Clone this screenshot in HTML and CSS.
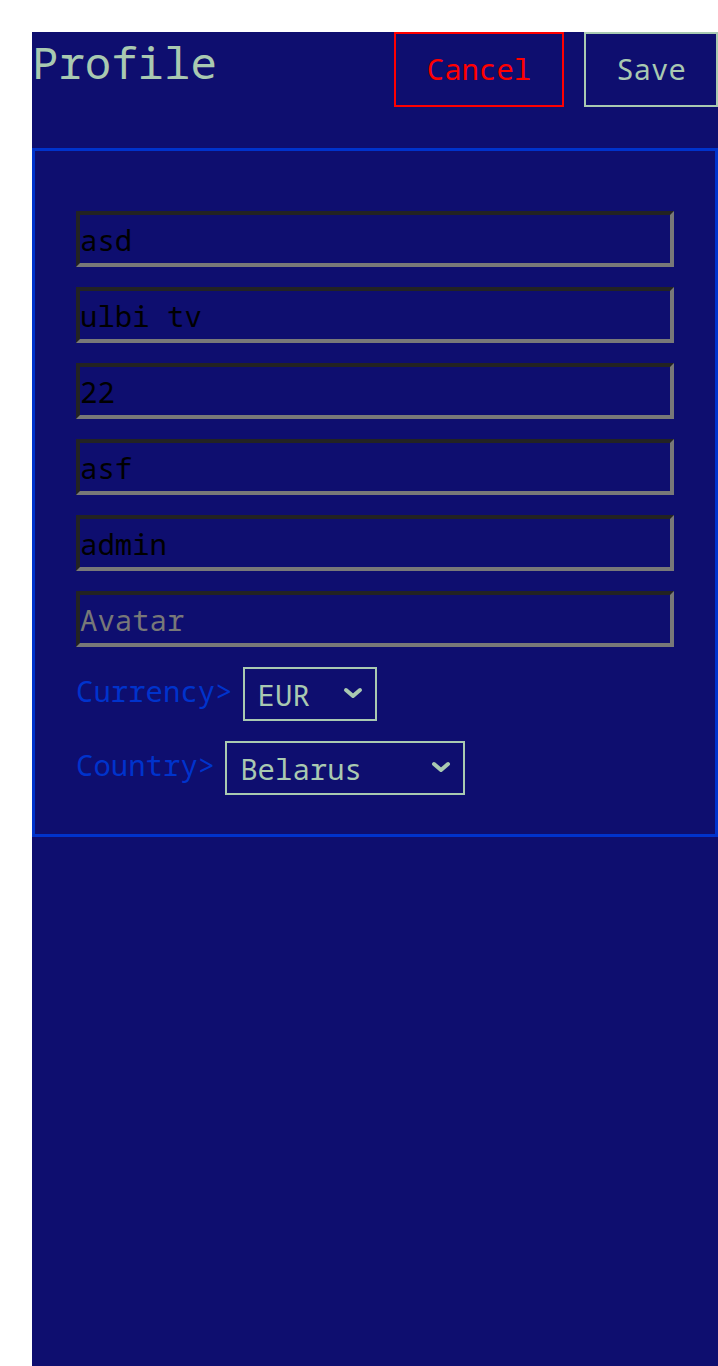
FILE: index.html
```html
<!DOCTYPE html>
<html lang="en">
<head>
<meta charset="utf-8">
<title>Profile</title>
<link rel="stylesheet" href="styles.css">
</head>
<body>
<div class="app">
  <div class="header">
    <h1 class="title">Profile</h1>
    <div class="actions">
      <button class="btn btn-cancel">Cancel</button>
      <button class="btn btn-save">Save</button>
    </div>
  </div>
  <div class="card">
    <input class="field" type="text" value="asd">
    <input class="field" type="text" value="ulbi tv">
    <input class="field" type="text" value="22">
    <input class="field" type="text" value="asf">
    <input class="field" type="text" value="admin">
    <input class="field" type="text" placeholder="Avatar">
    <div class="row">
      <span class="label">Currency&gt;</span>
      <span class="select-wrap">
        <select class="select select-currency">
          <option>EUR</option>
          <option>USD</option>
          <option>RUB</option>
        </select>
        <svg class="chev" width="20" height="12" viewBox="0 0 20 12" aria-hidden="true"><path d="M3 3 L10 9 L17 3" fill="none" stroke="#a9c9b1" stroke-width="4" stroke-linecap="round" stroke-linejoin="round"/></svg>
      </span>
    </div>
    <div class="row">
      <span class="label">Country&gt;</span>
      <span class="select-wrap">
        <select class="select select-country">
          <option>Belarus</option>
          <option>Ukraine</option>
          <option>Armenia</option>
          <option>Russia</option>
        </select>
        <svg class="chev" width="20" height="12" viewBox="0 0 20 12" aria-hidden="true"><path d="M3 3 L10 9 L17 3" fill="none" stroke="#a9c9b1" stroke-width="4" stroke-linecap="round" stroke-linejoin="round"/></svg>
      </span>
    </div>
  </div>
</div>
</body>
</html>
```
FILE: styles.css
```css
html, body {
  margin: 0;
  padding: 0;
  background: #ffffff;
}
body {
  padding: 32px 0 0 32px;
  overflow: hidden;
}
.app {
  background: #0e0e6f;
  min-height: 1334px;
  box-sizing: border-box;
  font-family: "Noto Sans Mono", monospace;
}
.header {
  display: flex;
  justify-content: space-between;
  align-items: flex-start;
  height: 116px;
}
.title {
  margin: 0;
  font-family: "Noto Sans Mono", monospace;
  font-weight: normal;
  font-size: 44px;
  line-height: normal;
  color: #a9c9b1;
}
.actions {
  display: flex;
  gap: 20px;
}
.btn {
  height: 75px;
  background: transparent;
  font-family: "Noto Sans Mono", monospace;
  font-size: 29px;
  padding: 0 0 2px 0;
  margin: 0;
  cursor: pointer;
}
.btn-cancel {
  width: 170px;
  border: 2px solid #ff0000;
  color: #ff0000;
}
.btn-save {
  width: 134px;
  border: 2px solid #a9c9b1;
  color: #a9c9b1;
}
.card {
  border: 3px solid #0033cc;
  padding: 60px 40px 39px 41px;
  display: flex;
  flex-direction: column;
  gap: 20px;
}
.field {
  width: 598px;
  height: 56px;
  box-sizing: border-box;
  border-style: solid;
  border-width: 4px;
  border-color: #232323 #787878 #787878 #232323;
  background: transparent;
  padding: 0;
  margin: 0;
  font-family: "Noto Sans Mono", monospace;
  font-size: 29px;
  color: #000000;
  outline: none;
}
.field::placeholder {
  color: #787878;
}
.row {
  display: flex;
  align-items: flex-start;
  gap: 10px;
}
.label {
  font-family: "Noto Sans Mono", monospace;
  font-size: 29px;
  line-height: normal;
  color: #0033cc;
  padding-top: 4px;
}
.select-wrap {
  position: relative;
  display: inline-flex;
}
.select {
  -webkit-appearance: none;
  appearance: none;
  box-sizing: border-box;
  height: 54px;
  border: 2px solid #a9c9b1;
  background: transparent;
  color: #a9c9b1;
  font-family: "Noto Sans Mono", monospace;
  font-size: 29px;
  line-height: normal;
  padding: 5px 8px 4px 13px;
  margin: 0;
  border-radius: 0;
}
.select-currency {
  width: 134px;
}
.select-country {
  width: 240px;
}
.chev {
  position: absolute;
  right: 14px;
  top: 20px;
  pointer-events: none;
}
```
